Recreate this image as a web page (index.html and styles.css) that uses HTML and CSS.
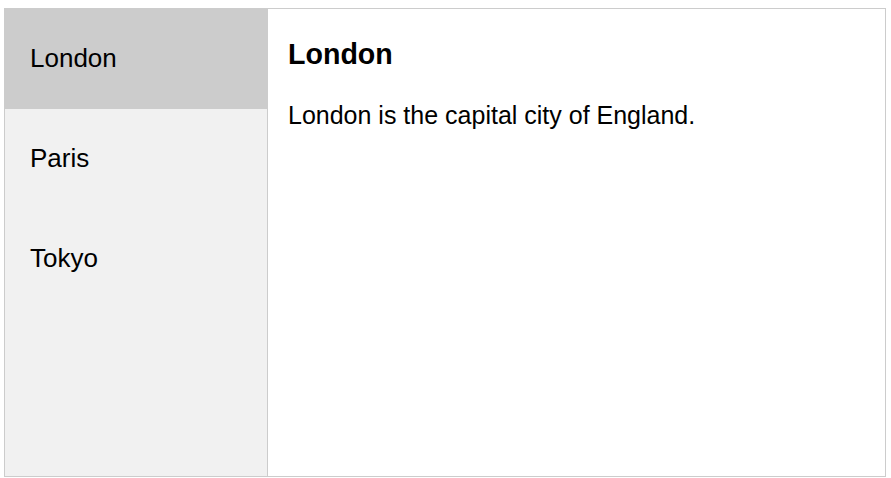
FILE: index.html
```html
<!DOCTYPE html>
<html>
<head>
<meta charset="utf-8">
<link rel="stylesheet" href="styles.css">
</head>
<body>
<div class="tabs">
  <div class="tab">
    <button class="tablink active">London</button>
    <button class="tablink">Paris</button>
    <button class="tablink">Tokyo</button>
  </div>
  <div class="tabcontent">
    <h3 class="title">London</h3>
    <p class="text">London is the capital city of England.</p>
  </div>
</div>
</body>
</html>
```
FILE: styles.css
```css
html, body {
  margin: 0;
  padding: 0;
  background: #ffffff;
}
body {
  font-family: "Liberation Sans", Arial, sans-serif;
  color: #000;
}
.tabs {
  display: flex;
  margin: 8px 0 0 4px;
  width: 882px;
  height: 469px;
}
.tab {
  width: 262px;
  flex: none;
  background: #f1f1f1;
  border: 1px solid #ccc;
}
.tablink {
  display: block;
  box-sizing: border-box;
  width: 100%;
  height: 100px;
  padding: 0 25px 2px 25px;
  background: inherit;
  border: none;
  outline: none;
  text-align: left;
  font-family: "Liberation Sans", Arial, sans-serif;
  font-size: 26px;
  color: #000;
}
.tablink.active {
  background: #ccc;
}
.tabcontent {
  flex: 1;
  border: 1px solid #ccc;
  border-left: none;
  padding: 0 20px;
}
.title {
  font-size: 28.6px;
  font-weight: bold;
  margin: 29px 0 30px;
}
.text {
  font-size: 25px;
  margin: 0;
}
```
